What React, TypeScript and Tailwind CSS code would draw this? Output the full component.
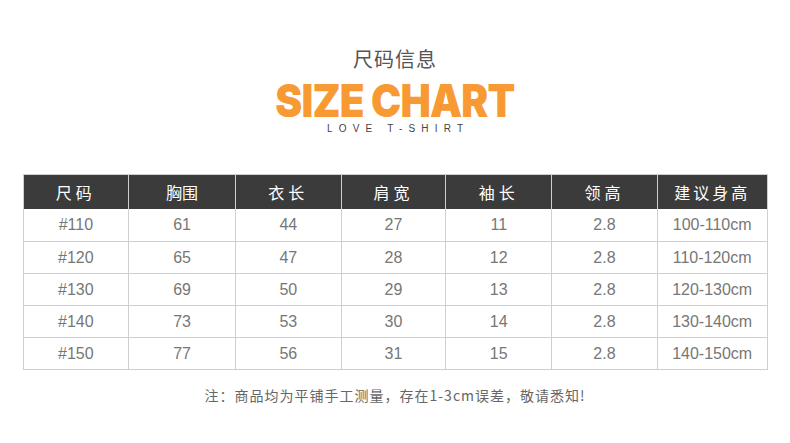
import React from "react";

const headers: { label: string; cls: string }[] = [
  { label: "尺码", cls: "tracking-[4px]" },
  { label: "胸围", cls: "tracking-[0px]" },
  { label: "衣长", cls: "tracking-[4px]" },
  { label: "肩宽", cls: "tracking-[4px]" },
  { label: "袖长", cls: "tracking-[4px]" },
  { label: "领高", cls: "tracking-[4px]" },
  { label: "建议身高", cls: "tracking-[3px]" },
];

const rows: string[][] = [
  ["#110", "61", "44", "27", "11", "2.8", "100-110cm"],
  ["#120", "65", "47", "28", "12", "2.8", "110-120cm"],
  ["#130", "69", "50", "29", "13", "2.8", "120-130cm"],
  ["#140", "73", "53", "30", "14", "2.8", "130-140cm"],
  ["#150", "77", "56", "31", "15", "2.8", "140-150cm"],
];

const colW = ["w-[106px]", "w-[107px]", "w-[106px]", "w-[105px]", "w-[106px]", "w-[106px]", "w-[109px]"];

export default function App() {
  return (
    <div className="w-[790px] h-[443px] bg-white flex flex-col items-center overflow-hidden">
      <div className="mt-[45px] text-[20px] leading-[28px] text-[#555] tracking-[1px] font-['Noto_Sans_CJK_SC',sans-serif]">
        尺码信息
      </div>
      <div className="mt-[7px] text-[46px] leading-[40px] font-black text-[#f89a33] tracking-[-0.02em] scale-x-[0.88] font-['Inter',sans-serif]">
        SIZE CHART
      </div>
      <div className="mt-[3px] text-[10px] leading-[12px] text-[#444] tracking-[0.62em] pl-[0.62em] font-['Liberation_Sans',Arial,sans-serif]">
        LOVE T-SHIRT
      </div>
      <div className="mt-[39px] w-[745px] border border-[#cfcfcf]">
        <div className="flex h-[34px] bg-[#3b3b3b]">
          {headers.map((h, i) => (
            <div
              key={i}
              className={`${colW[i]} flex items-center justify-center text-white text-[16px] font-['Noto_Sans_CJK_SC',sans-serif] ${i < 6 ? "border-r border-[#cfcfcf]" : ""}`}
            >
              <span className={h.cls}>{h.label}</span>
            </div>
          ))}
        </div>
        {rows.map((r, ri) => (
          <div key={ri} className={`flex h-[32px] ${ri > 0 ? "border-t border-[#cfcfcf]" : ""}`}>
            {r.map((c, ci) => (
              <div
                key={ci}
                className={`${colW[ci]} flex items-center justify-center text-[16px] text-[#777] font-['Liberation_Sans',Arial,sans-serif] ${ci < 6 ? "border-r border-[#cfcfcf]" : ""}`}
              >
                {c}
              </div>
            ))}
          </div>
        ))}
      </div>
      <div className="mt-[15px] text-[14px] leading-[20px] text-[#666] tracking-[1px] font-['Noto_Sans_CJK_SC',sans-serif]">
        注：商品均为平铺手工测量，存在1-3cm误差，敬请悉知!
      </div>
    </div>
  );
}
